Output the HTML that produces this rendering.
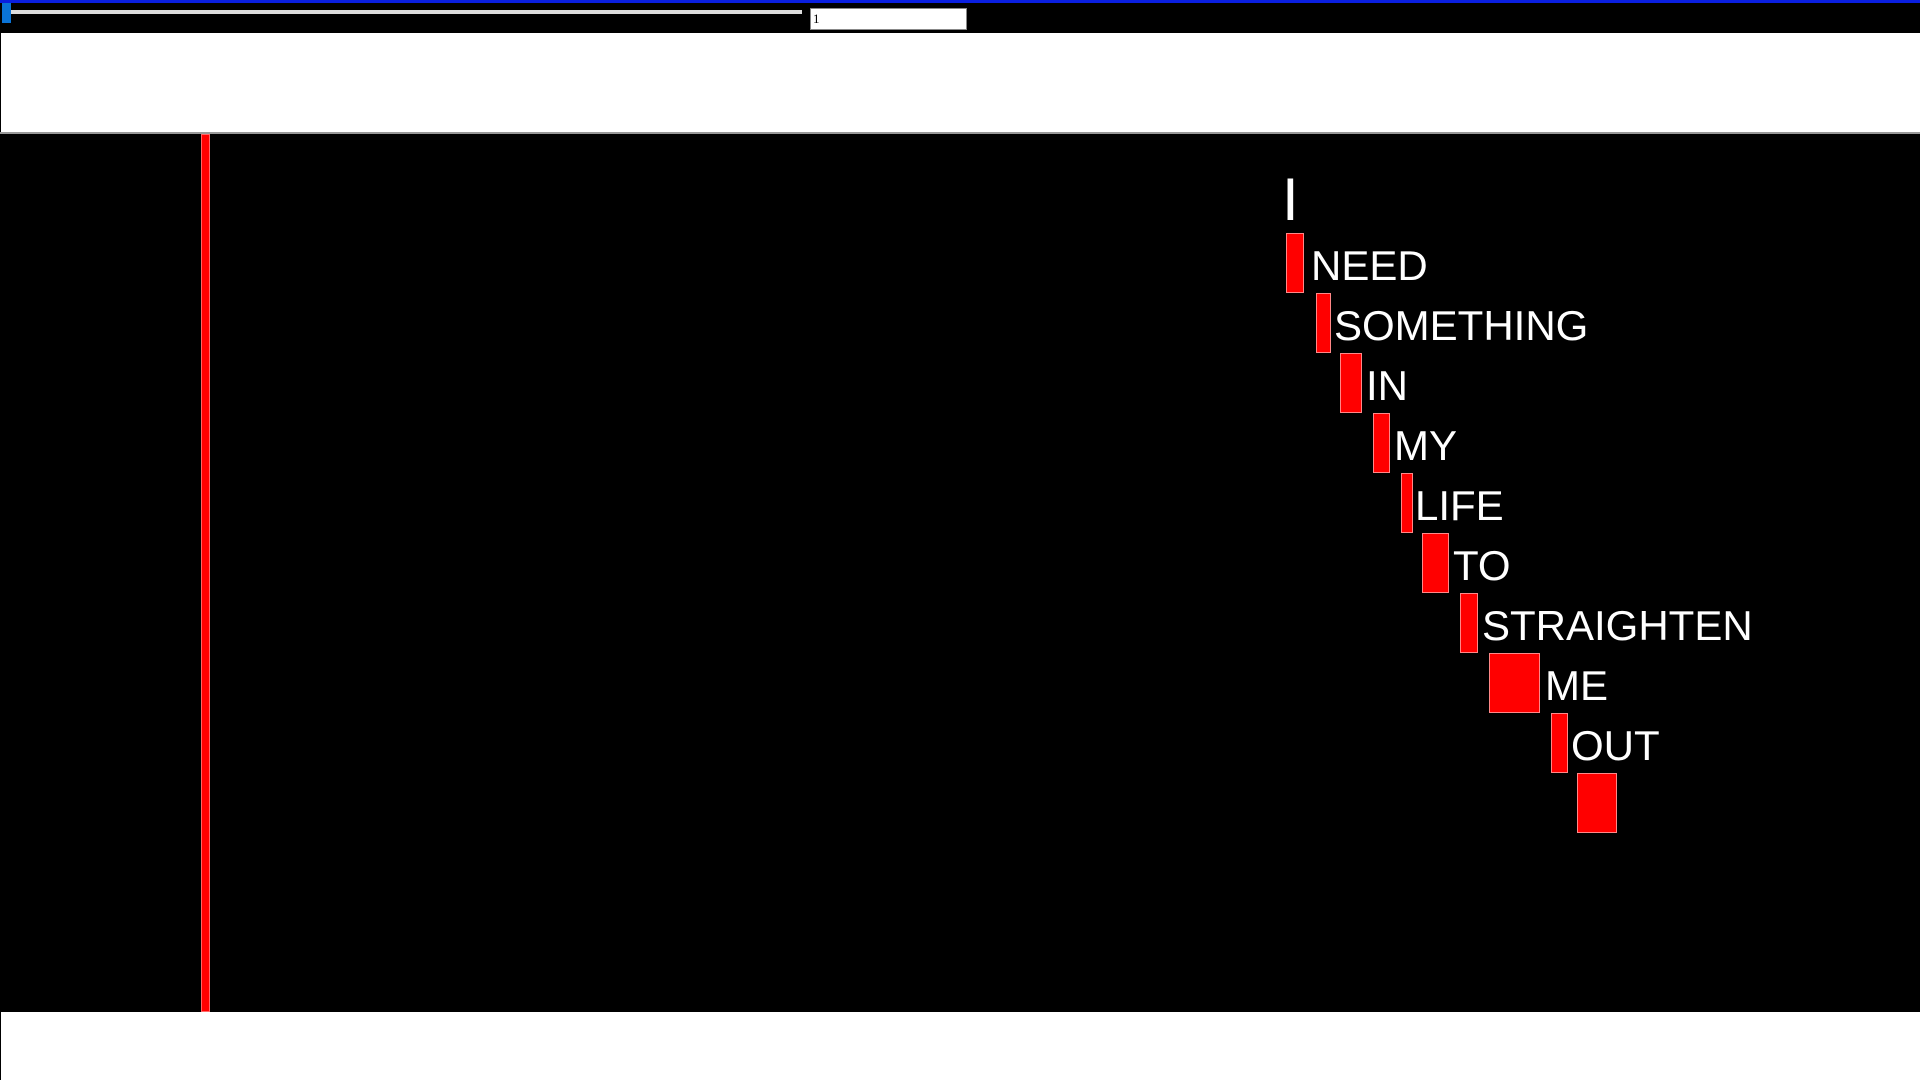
<!DOCTYPE html>
<html><head><style>
html,body{margin:0;padding:0;width:1920px;height:1080px;overflow:hidden;background:#fff;font-family:"Liberation Sans",Arial,sans-serif}
.a{position:absolute}
.b{position:absolute;background:#f00;box-sizing:border-box;border:1px solid #f88;height:60px}
.t{position:absolute;color:#fff;font-size:42px;line-height:42px;white-space:nowrap}
</style></head><body>
<div class="a" style="left:0;top:0;width:1920px;height:33px;background:#000"></div>
<div class="a" style="left:0;top:0;width:1920px;height:3px;background:#0a1fe0"></div>
<div class="a" style="left:6px;top:10px;width:796px;height:4px;background:#ddd"></div>
<div class="a" style="left:2px;top:3px;width:9px;height:20px;background:#0a74d8"></div>
<div class="a" style="left:810px;top:8px;width:157px;height:22px;background:#fff;border:1px solid #888;box-sizing:border-box;font-family:'Liberation Serif',serif;font-size:13px;line-height:20px;padding-left:2px">1</div>
<div class="a" style="left:0;top:33px;width:1px;height:100px;background:#000"></div>
<div class="a" style="left:0;top:132px;width:1920px;height:880px;background:#000;border-top:2px solid #999;box-sizing:border-box"></div>
<div class="a" style="left:0;top:1012px;width:1px;height:68px;background:#000"></div>
<div class="a" style="left:201px;top:134px;width:9px;height:878px;background:#f00;border:1px solid #f66;box-sizing:border-box"></div>

<div class="t" style="left:1282px;top:170px;font-size:60px;line-height:60px">I</div>
<div class="b" style="left:1286px;top:233px;width:18px"></div><div class="t" style="left:1311px;top:245px">NEED</div>
<div class="b" style="left:1316px;top:293px;width:15px"></div><div class="t" style="left:1334px;top:305px">SOMETHING</div>
<div class="b" style="left:1340px;top:353px;width:22px"></div><div class="t" style="left:1366px;top:365px">IN</div>
<div class="b" style="left:1373px;top:413px;width:17px"></div><div class="t" style="left:1394px;top:425px">MY</div>
<div class="b" style="left:1401px;top:473px;width:12px"></div><div class="t" style="left:1415px;top:485px">LIFE</div>
<div class="b" style="left:1422px;top:533px;width:27px"></div><div class="t" style="left:1453px;top:545px">TO</div>
<div class="b" style="left:1460px;top:593px;width:18px"></div><div class="t" style="left:1482px;top:605px">STRAIGHTEN</div>
<div class="b" style="left:1489px;top:653px;width:51px"></div><div class="t" style="left:1545px;top:665px">ME</div>
<div class="b" style="left:1551px;top:713px;width:17px"></div><div class="t" style="left:1571px;top:725px">OUT</div>
<div class="b" style="left:1577px;top:773px;width:40px"></div>
</body></html>
